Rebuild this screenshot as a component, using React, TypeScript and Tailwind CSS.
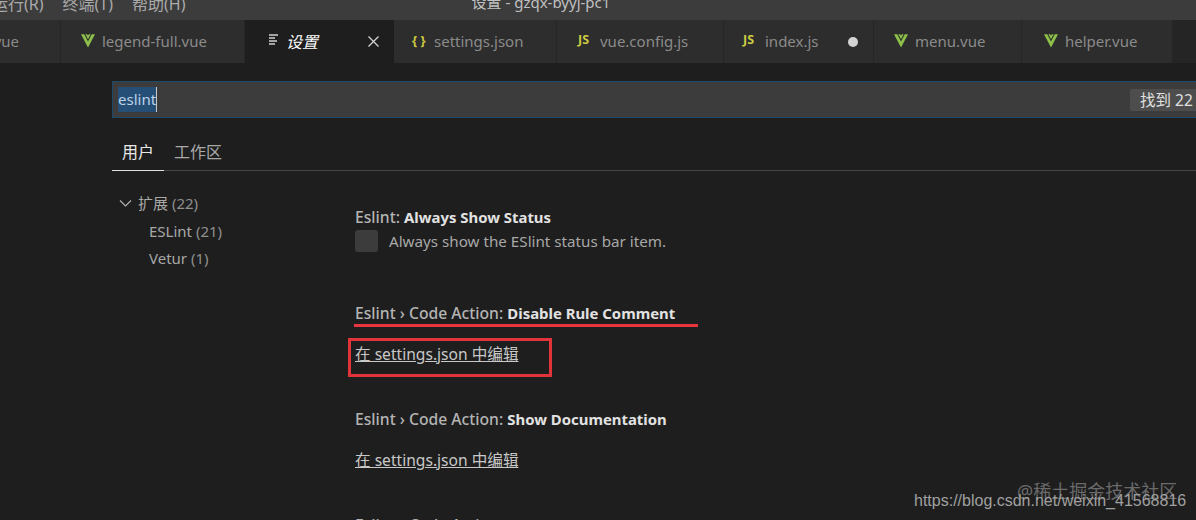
import React from 'react'

const FONT = "font-['Noto_Sans','Noto_Sans_CJK_SC',sans-serif]"

function VueIcon() {
    return (
        <svg width="14" height="15" viewBox="0 0 24 24" preserveAspectRatio="none" className='mt-[-3px] shrink-0'>
            <path d="M0 2h5.5L12 13.5 18.5 2H24L12 23z" fill="#8dc149" />
            <path d="M7.5 2h3.2L12 4.5 13.3 2h3.2L12 10z" fill="#8dc149" />
        </svg>
    )
}

function JsIcon() {
    return <span className="mt-[-3px] w-[15px] shrink-0 text-[12.5px] font-bold leading-none text-[#cbcb41]">JS</span>
}

function JsonIcon() {
    return <span className="mt-[-3px] w-[15px] shrink-0 text-[13px] font-bold leading-none text-[#cbcb41]">{'{ }'}</span>
}

function Tab({ width, icon, name, pl, dirty }: { width: string, icon: React.ReactNode, name: string, pl: string, dirty?: boolean }) {
    return (
        <div className={`${width} ${pl} flex h-full shrink-0 items-center gap-[7px] border-r border-[#262626] bg-[#2d2d2d]`}>
            {icon}
            <span className="text-[15px] text-[#8b8b8b]">{name}</span>
            {dirty && <span className="ml-auto mr-[15px] h-[10px] w-[10px] rounded-full bg-[#d4d4d4]"></span>}
        </div>
    )
}

function SettingTitle({ prefix, name }: { prefix: string, name: string }) {
    return (
        <p className="text-[15.7px] font-medium leading-[20px] text-[#b4b4b4]">
            {prefix} <span className="text-[14.9px] font-bold text-[#e2e2e2]">{name}</span>
        </p>
    )
}

function EditLink() {
    return <a className="block text-[15.6px] leading-[20px] text-[#c8c8c8] underline">在 settings.json 中编辑</a>
}

function App() {
    return (
        <div className={`${FONT} relative h-[520px] w-[1196px] overflow-hidden bg-[#1e1e1e]`}>
            <div className="relative flex h-[20px] items-end overflow-hidden bg-[#3c3c3c] text-[16px] leading-[20px] text-[#aaaaaa]">
                <div className="flex gap-[19px] pb-[6px]">
                    <span className="ml-[-8px]">运行(R)</span>
                    <span>终端(T)</span>
                    <span>帮助(H)</span>
                </div>
                <span className="ml-[286px] pb-[8px] text-[15px] text-[#c0c0c0]">设置 - gzqx-byyj-pc1</span>
            </div>

            <div className="flex h-[43px] bg-[#252526]">
                <div className="flex h-full w-[61px] shrink-0 items-center justify-end border-r border-[#262626] bg-[#2d2d2d] pr-[41px]">
                    <span className="text-[15px] text-[#8b8b8b]">vue</span>
                </div>
                <Tab width="w-[184px]" pl="pl-[20px]" icon={<VueIcon />} name="legend-full.vue" />
                <div className="flex h-full w-[149px] shrink-0 items-center bg-[#1e1e1e] pl-[21px]">
                    <svg width="14" height="14" viewBox="0 0 14 14" className="mt-[-3px] shrink-0" stroke="#d0d0d0" strokeWidth="1.4">
                        <path d="M3 2h9M3 5h6M3 8h8M3 11h6" />
                    </svg>
                    <span className="ml-[6px] text-[16px] italic text-white">设置</span>
                    <svg width="13" height="13" viewBox="0 0 13 13" className="ml-auto mr-[14px] shrink-0" stroke="#d8d8d8" strokeWidth="1.2">
                        <path d="M1.5 1.5l10 10M11.5 1.5l-10 10" />
                    </svg>
                </div>
                <Tab width="w-[163px]" pl="pl-[18px]" icon={<JsonIcon />} name="settings.json" />
                <Tab width="w-[167px]" pl="pl-[21px]" icon={<JsIcon />} name="vue.config.js" />
                <Tab width="w-[150px]" pl="pl-[19px]" icon={<JsIcon />} name="index.js" dirty />
                <Tab width="w-[148px]" pl="pl-[20px]" icon={<VueIcon />} name="menu.vue" />
                <Tab width="w-[151px]" pl="pl-[22px]" icon={<VueIcon />} name="helper.vue" />
            </div>

            <div className="pl-[112px] pt-[18px]">
                <div className="flex h-[37px] w-[1100px] items-center border border-[#1d4a6b] bg-[#3c3c3c] pl-[5px]">
                    <span className="border-r border-[#c8c8c8] bg-[#264f78] py-[2px] text-[15px] leading-[21px] text-[#bcd2e6]">eslint</span>
                    <span className="ml-auto w-[81px] rounded-l-[2px] bg-[#4d4d4d] pl-[10px] text-[15.5px] leading-[22px] text-[#e0e0e0]">找到 22</span>
                </div>

                <div className="mt-[16px] flex h-[37px] border-b border-[#454545] text-[16px]">
                    <div className="flex h-[37px] w-[52px] items-center justify-center border-b border-[#e0e0e0] pb-[1px] text-[#e7e7e7]">用户</div>
                    <div className="ml-[10px] flex h-[37px] items-center pb-[1px] text-[#a8a8a8]">工作区</div>
                </div>

                <div className="flex">
                    <div className="w-[243px] shrink-0 pl-[7px] pt-[19px] text-[15px] leading-[27.5px] text-[#a8a8a8]">
                        <div className="flex items-center">
                            <svg width="13" height="13" viewBox="0 0 13 13" fill="none" stroke="#b0b0b0" strokeWidth="1.2" className="shrink-0">
                                <path d="M1 3.5l5.5 5.5L12 3.5" />
                            </svg>
                            <span className="ml-[6px]">扩展 <span className="text-[#8f8f8f]">(22)</span></span>
                        </div>
                        <div className="pl-[30px]">ESLint <span className="text-[#8f8f8f]">(21)</span></div>
                        <div className="pl-[30px]">Vetur <span className="text-[#8f8f8f]">(1)</span></div>
                    </div>

                    <div className="pt-[36px]">
                        <SettingTitle prefix="Eslint:" name="Always Show Status" />
                        <div className="mt-[3px] flex items-center">
                            <span className="h-[22px] w-[23px] rounded-[3px] bg-[#3c3c3c]"></span>
                            <span className="ml-[11px] text-[15.2px] leading-[22px] text-[#a8a8a8]">Always show the ESlint status bar item.</span>
                        </div>

                        <div className="relative mt-[51px]">
                            <SettingTitle prefix="Eslint › Code Action:" name="Disable Rule Comment" />
                            <div className="absolute left-[-1px] top-[21px] h-[3px] w-[344px] bg-[#e8343c]"></div>
                        </div>
                        <div className="relative mt-[21px] h-[20px]">
                            <EditLink />
                            <div className="absolute left-[-7px] top-[-6px] h-[39px] w-[204px] border-[3px] border-[#e0333a]"></div>
                        </div>

                        <div className="mt-[45px]">
                            <SettingTitle prefix="Eslint › Code Action:" name="Show Documentation" />
                        </div>
                        <div className="mt-[21px] h-[20px]">
                            <EditLink />
                        </div>

                        <div className="mt-[45px]">
                            <SettingTitle prefix="Eslint › Code Action:" name="Rules Customizations" />
                        </div>
                    </div>
                </div>
            </div>

            <span className="absolute left-[1017px] top-[481px] text-[18px] leading-[20px] text-[#6a6a6a]">@稀土掘金技术社区</span>
            <span className="absolute left-[914px] top-[491px] font-['Liberation_Sans',sans-serif] text-[16px] leading-[20px] text-[#a0a0a0]">https://blog.csdn.net/weixin_41568816</span>
        </div>
    )
}

export default App
